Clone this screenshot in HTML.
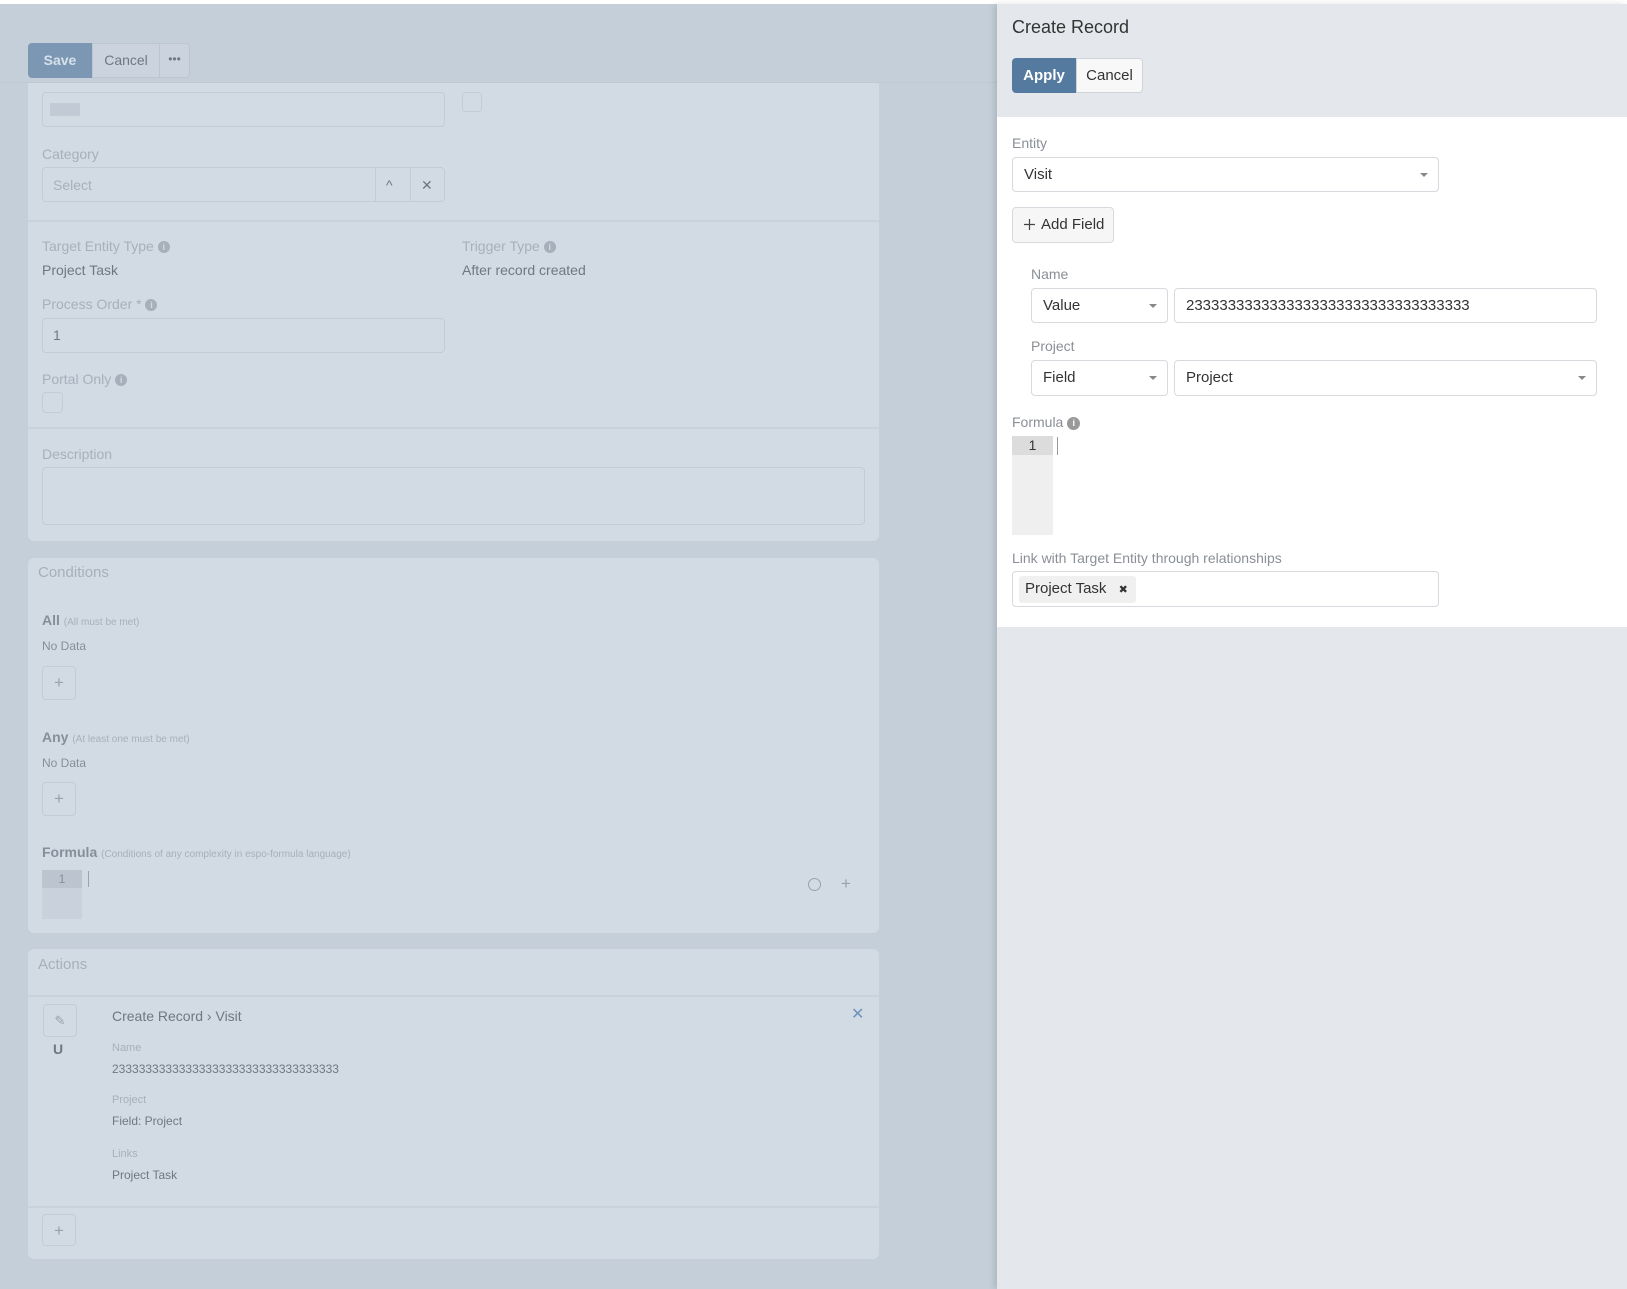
<!DOCTYPE html>
<html><head><meta charset="utf-8"><style>
*{box-sizing:border-box;margin:0;padding:0}
body{width:1627px;height:1289px;overflow:hidden;background:#c5cfd9;font-family:"Liberation Sans",sans-serif;position:relative}
.a{position:absolute}
.t{position:absolute;white-space:nowrap;line-height:20px}
.lbl{color:#a6b0bb;font-size:14px}
.val{color:#6e7883;font-size:14px}
.card{position:absolute;background:#d2dbe4;border-radius:6px;left:28px;width:851px}
.inp{position:absolute;border:1px solid #c3ccd6;border-radius:4px;background:#d2dbe4}
.hr{position:absolute;left:28px;width:851px;height:2px;background:#c9d2dc}
.pb{position:absolute;width:34px;height:34px;border:1px solid #c3ccd6;border-radius:4px;color:#98a2ad;text-align:center;line-height:31px;font-size:17px}
.info{display:inline-block;width:12px;height:12px;border-radius:50%;background:#a6b0bb;color:#d2dbe4;font-size:9px;line-height:12px;text-align:center;vertical-align:1px;font-weight:bold}
.R .lab{position:absolute;color:#8a8f96;font-size:14px;line-height:20px;white-space:nowrap}
.R .box{position:absolute;border:1px solid #d6d9dd;border-radius:4px;background:#fff;font-size:15px;color:#333;line-height:33px;padding-left:11px;white-space:nowrap}
.caret{position:absolute;right:10px;top:15px;width:0;height:0;border-left:4px solid transparent;border-right:4px solid transparent;border-top:4px solid #888}
</style></head><body>
<div class="a" style="left:0;top:0;width:1627px;height:4px;background:#fff"></div>
<!-- left -->
<div class="card" style="top:60px;height:481px"></div>
<div class="a" style="left:0;top:4px;width:997px;height:79px;background:#c5cfd9;border-bottom:1px solid #bfc9d3"></div>
<div class="a" style="left:28px;top:43px;width:64px;height:35px;background:#7b97b3;border-radius:4px 0 0 4px;color:#d6e0ea;font-size:14px;font-weight:bold;line-height:35px;text-align:center">Save</div>
<div class="a" style="left:92px;top:43px;width:68px;height:35px;border:1px solid #bcc6d0;color:#6e7883;font-size:14px;line-height:33px;text-align:center;background:#cbd4de">Cancel</div>
<div class="a" style="left:159px;top:43px;width:31px;height:35px;border:1px solid #bcc6d0;border-radius:0 4px 4px 0;color:#6e7883;font-size:12px;line-height:31px;text-align:center;background:#cbd4de">•••</div>
<div class="inp" style="left:42px;top:92px;width:403px;height:35px"></div>
<div class="a" style="left:50px;top:103px;width:30px;height:13px;background:#c2cbd5"></div>
<div class="inp" style="left:462px;top:92px;width:20px;height:20px"></div>
<div class="t lbl" style="left:42px;top:144px">Category</div>
<div class="inp" style="left:42px;top:167px;width:403px;height:35px"></div>
<div class="t lbl" style="left:53px;top:175px">Select</div>
<div class="a" style="left:375px;top:167px;width:1px;height:35px;background:#c3ccd6"></div>
<div class="a" style="left:410px;top:167px;width:1px;height:35px;background:#c3ccd6"></div>
<div class="t val" style="left:386px;top:175px">^</div>
<div class="t val" style="left:421px;top:175px">✕</div>
<div class="hr" style="top:220px"></div>
<div class="t lbl" style="left:42px;top:236px">Target Entity Type <span class="info">i</span></div>
<div class="t val" style="left:42px;top:260px">Project Task</div>
<div class="t lbl" style="left:462px;top:236px">Trigger Type <span class="info">i</span></div>
<div class="t val" style="left:462px;top:260px">After record created</div>
<div class="t lbl" style="left:42px;top:294px">Process Order * <span class="info">i</span></div>
<div class="inp" style="left:42px;top:318px;width:403px;height:35px"></div>
<div class="t val" style="left:53px;top:325px">1</div>
<div class="t lbl" style="left:42px;top:369px">Portal Only <span class="info">i</span></div>
<div class="inp" style="left:42px;top:392px;width:21px;height:21px"></div>
<div class="hr" style="top:427px"></div>
<div class="t lbl" style="left:42px;top:444px">Description</div>
<div class="inp" style="left:42px;top:467px;width:823px;height:58px"></div>

<div class="card" style="top:558px;height:375px"></div>
<div class="t lbl" style="left:38px;top:563px;font-size:15px">Conditions</div>
<div class="t" style="left:42px;top:610px;font-size:14px;color:#858f9a;font-weight:bold">All <span style="font-weight:normal;font-size:10px;color:#a6b0bb">(All must be met)</span></div>
<div class="t" style="left:42px;top:636px;font-size:12px;color:#858f9a">No Data</div>
<div class="pb" style="left:42px;top:666px">+</div>
<div class="t" style="left:42px;top:727px;font-size:14px;color:#858f9a;font-weight:bold">Any <span style="font-weight:normal;font-size:10px;color:#a6b0bb">(At least one must be met)</span></div>
<div class="t" style="left:42px;top:753px;font-size:12px;color:#858f9a">No Data</div>
<div class="pb" style="left:42px;top:782px">+</div>
<div class="t" style="left:42px;top:842px;font-size:14px;color:#858f9a;font-weight:bold">Formula <span style="font-weight:normal;font-size:10px;color:#a6b0bb">(Conditions of any complexity in espo-formula language)</span></div>
<div class="a" style="left:42px;top:870px;width:40px;height:49px;background:#c9d2dc"></div>
<div class="a" style="left:42px;top:870px;width:40px;height:18px;background:#bcc5cf;color:#858f9a;font-size:12px;text-align:center;line-height:18px">1</div>
<div class="a" style="left:88px;top:871px;width:1px;height:16px;background:#9aa4ae"></div>
<div class="a" style="left:808px;top:878px;width:13px;height:13px;border:1.5px solid #98a2ad;border-radius:50%"></div>
<div class="t" style="left:841px;top:874px;font-size:17px;color:#98a2ad">+</div>

<div class="card" style="top:949px;height:310px"></div>
<div class="t lbl" style="left:38px;top:955px;font-size:15px">Actions</div>
<div class="hr" style="top:995px"></div>
<div class="pb" style="left:43px;top:1004px;width:34px;height:33px;font-size:13px">✎</div>
<div class="t" style="left:53px;top:1039px;font-size:14px;color:#6e7883;font-weight:bold">U</div>
<div class="t" style="left:112px;top:1006px;font-size:14px;color:#6e7883">Create Record › Visit</div>
<div class="t" style="left:851px;top:1005px;font-size:16px;color:#6d93bd">✕</div>
<div class="t" style="left:112px;top:1038px;font-size:11px;color:#a6b0bb">Name</div>
<div class="t" style="left:112px;top:1059px;font-size:12px;color:#6e7883">2333333333333333333333333333333333</div>
<div class="t" style="left:112px;top:1090px;font-size:11px;color:#a6b0bb">Project</div>
<div class="t" style="left:112px;top:1111px;font-size:12px;color:#6e7883">Field: Project</div>
<div class="t" style="left:112px;top:1144px;font-size:11px;color:#a6b0bb">Links</div>
<div class="t" style="left:112px;top:1165px;font-size:12px;color:#6e7883">Project Task</div>
<div class="hr" style="top:1206px"></div>
<div class="pb" style="left:42px;top:1214px;height:32px">+</div>

<!-- right panel -->
<div class="R">
<div class="a" style="left:997px;top:4px;width:630px;height:1285px;background:#e4e8ec;box-shadow:-3px 0 6px rgba(0,0,0,.12)"></div>
<div class="a" style="left:997px;top:117px;width:630px;height:510px;background:#fff"></div>
<div class="t" style="left:1012px;top:16px;font-size:18px;line-height:22px;color:#333">Create Record</div>
<div class="a" style="left:1012px;top:58px;width:64px;height:35px;background:#557a9f;border-radius:4px 0 0 4px;color:#fff;font-size:15px;font-weight:bold;line-height:35px;text-align:center">Apply</div>
<div class="a" style="left:1076px;top:58px;width:67px;height:35px;background:#f8f8f8;border:1px solid #d0d4d8;border-radius:0 4px 4px 0;color:#333;font-size:15px;line-height:33px;text-align:center">Cancel</div>
<div class="lab" style="left:1012px;top:133px">Entity</div>
<div class="box" style="left:1012px;top:157px;width:427px;height:35px">Visit<span class="caret"></span></div>
<div class="box" style="left:1012px;top:207px;width:102px;height:36px;background:#f6f6f6;line-height:34px"><svg width="11" height="11" viewBox="0 0 11 11" style="vertical-align:-1px;margin-right:6px"><path d="M5.5 0V11M0 5.5H11" stroke="#444" stroke-width="1.2"/></svg>Add Field</div>
<div class="lab" style="left:1031px;top:264px">Name</div>
<div class="box" style="left:1031px;top:288px;width:137px;height:35px">Value<span class="caret"></span></div>
<div class="box" style="left:1174px;top:288px;width:423px;height:35px">2333333333333333333333333333333333</div>
<div class="lab" style="left:1031px;top:336px">Project</div>
<div class="box" style="left:1031px;top:360px;width:137px;height:36px">Field<span class="caret"></span></div>
<div class="box" style="left:1174px;top:360px;width:423px;height:36px">Project<span class="caret"></span></div>
<div class="lab" style="left:1012px;top:412px">Formula <span style="display:inline-block;width:13px;height:13px;border-radius:50%;background:#999;color:#fff;font-size:9px;line-height:13px;text-align:center;font-weight:bold;vertical-align:1px">i</span></div>
<div class="a" style="left:1012px;top:436px;width:41px;height:99px;background:#efefef"></div>
<div class="a" style="left:1012px;top:436px;width:41px;height:19px;background:#dcdcdc;color:#333;font-size:14px;line-height:19px;text-align:center">1</div>
<div class="a" style="left:1057px;top:437px;width:1px;height:18px;background:#999"></div>
<div class="lab" style="left:1012px;top:548px">Link with Target Entity through relationships</div>
<div class="box" style="left:1012px;top:571px;width:427px;height:36px;padding-left:6px">
<span style="display:inline-block;background:#f0f0f0;border-radius:3px;padding:0 8px 0 6px;line-height:25px;margin-top:4px;vertical-align:top">Project Task <span style="font-size:11px;margin-left:8px">✖</span></span></div>
</div>
</body></html>
